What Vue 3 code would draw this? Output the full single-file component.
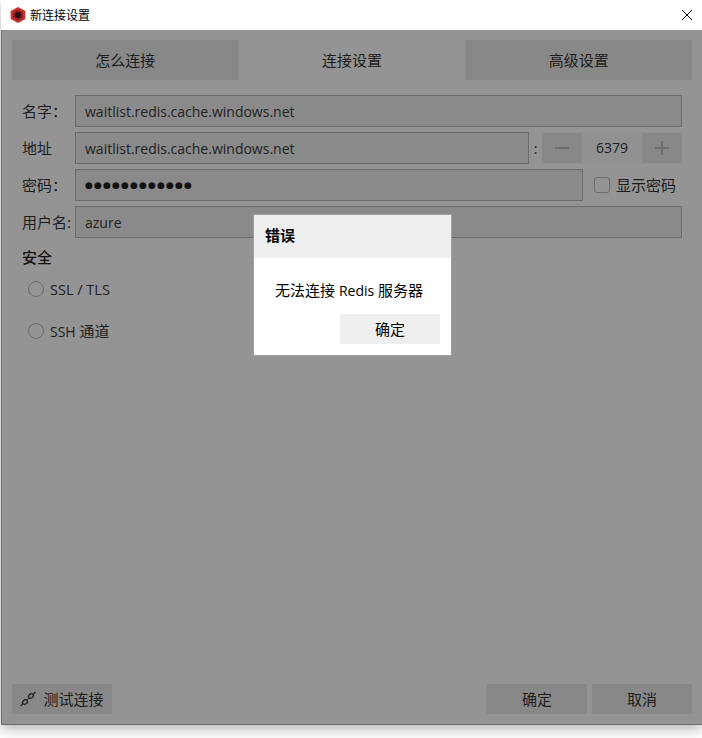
<script setup>
const tabs = [
  { label: '怎么连接', active: false },
  { label: '连接设置', active: true },
  { label: '高级设置', active: false },
]
</script>

<template>
  <div class="page">
    <div class="window">
      <header class="titlebar">
        <svg class="logo" width="16" height="16" viewBox="0 0 16 16">
          <polygon points="8,0 15.4,4 15.4,12 8,16 0.6,12 0.6,4" fill="#c6322e" />
          <polygon points="8,2.6 13,5.3 13,10.7 8,13.4 3,10.7 3,5.3" fill="#8f1f20" />
          <circle cx="8" cy="8" r="3" fill="#2c0f12" />
        </svg>
        <span class="title">新连接设置</span>
        <svg class="close" width="12" height="12" viewBox="0 0 12 12">
          <path d="M1 1L11 11M11 1L1 11" stroke="#111" stroke-width="1" fill="none" />
        </svg>
      </header>

      <div class="body">
        <nav class="tabs">
          <div v-for="t in tabs" :key="t.label" class="tab" :class="{ active: t.active }">{{ t.label }}</div>
        </nav>

        <div class="form">
          <div class="row">
            <label class="lbl">名字：</label>
            <div class="input">waitlist.redis.cache.windows.net</div>
          </div>
          <div class="row">
            <label class="lbl">地址</label>
            <div class="input">waitlist.redis.cache.windows.net</div>
            <span class="colon">:</span>
            <div class="spin">
              <span class="spin-btn">
                <svg width="14" height="14" viewBox="0 0 14 14"><path d="M0 7H14" stroke="#6e6e6e" stroke-width="2" /></svg>
              </span>
              <span class="spin-val">6379</span>
              <span class="spin-btn">
                <svg width="14" height="14" viewBox="0 0 14 14"><path d="M0 7H14M7 0V14" stroke="#6e6e6e" stroke-width="2" /></svg>
              </span>
            </div>
          </div>
          <div class="row">
            <label class="lbl">密码：</label>
            <div class="input dots">●●●●●●●●●●●●</div>
            <span class="check"></span>
            <span class="check-label">显示密码</span>
          </div>
          <div class="row">
            <label class="lbl">用户名:</label>
            <div class="input">azure</div>
          </div>
        </div>

        <div class="section">安全</div>
        <div class="radio first"><span class="dot"></span><span class="latin-wide">SSL / TLS</span></div>
        <div class="radio"><span class="dot"></span><span class="radio-cjk"><span class="latin">SSH</span> 通道</span></div>

        <footer class="footer">
          <button class="btn test">
            <svg width="16" height="16" viewBox="0 0 16 16">
              <g fill="none" stroke="#2a2a2a" stroke-width="1.4">
                <path d="M0.6 15L3 12.8" />
                <path d="M15.6 1L13 3.4" />
                <ellipse cx="5" cy="11" rx="2.6" ry="2" transform="rotate(-40 5 11)" />
                <ellipse cx="11" cy="5" rx="2.6" ry="2" transform="rotate(-40 11 5)" />
                <path d="M6.8 9.2L9.2 6.8" stroke-dasharray="1.2 0.8" />
              </g>
            </svg>
            <span>测试连接</span>
          </button>
          <button class="btn ok">确定</button>
          <button class="btn">取消</button>
        </footer>
      </div>

      <div class="dialog">
        <div class="dialog-head">错误</div>
        <div class="dialog-msg">无法连接 <span class="latin">Redis</span> 服务器</div>
        <div class="dialog-actions"><button class="dialog-btn">确定</button></div>
      </div>
    </div>
  </div>
</template>

<style>
html, body { margin: 0; background: #fff; }
</style>

<style scoped>
.page {
  width: 702px;
  height: 738px;
  overflow: hidden;
  background: #fff;
  font-family: "Open Sans", "Noto Sans CJK SC", sans-serif;
  color: #1d1d1d;
  font-size: 15px;
}
.latin { font-size: 14px; }
.latin-wide { font-size: 14.5px; }
.window {
  position: relative;
  width: 701px;
  height: 725px;
  margin-left: 1px;
  box-shadow: 0 4px 12px rgba(0, 0, 0, 0.3);
  display: flex;
  flex-direction: column;
}
.titlebar {
  height: 30px;
  flex: none;
  background: #fff;
  display: flex;
  align-items: center;
  padding: 0 9px 0 9px;
}
.logo { flex: none; }
.title { margin-left: 4px; font-size: 12px; color: #000; flex: 1; }
.close { flex: none; }
.body {
  flex: 1;
  background: #949494;
  border-left: 1px solid #6f6f6f;
  border-bottom: 1px solid #6f6f6f;
  padding: 10px 10px 10px 10px;
  display: flex;
  flex-direction: column;
  min-height: 0;
}
.tabs { display: flex; height: 40px; flex: none; }
.tab {
  flex: 1;
  display: flex;
  align-items: center;
  justify-content: center;
  background: #888;
  padding-bottom: 2px;
  box-sizing: border-box;
}
.tab.active { background: transparent; }
.form {
  margin-top: 15px;
  display: flex;
  flex-direction: column;
  gap: 5px;
  padding-right: 10px;
}
.row { display: flex; align-items: center; height: 32px; }
.lbl { width: 63px; flex: none; padding: 0 0 2px 10px; box-sizing: border-box; white-space: nowrap; }
.input {
  flex: 1;
  height: 32px;
  box-sizing: border-box;
  border: 1px solid #6c6c6c;
  background: #8a8a8a;
  padding-left: 9px;
  line-height: 31px;
  font-size: 14px;
  color: #222;
  white-space: nowrap;
  overflow: hidden;
}
.dots { font-size: 9px; letter-spacing: 1.15px; color: #111; font-family: "DejaVu Sans", sans-serif; }
.colon { width: 13px; flex: none; text-align: center; font-size: 14px; }
.spin { width: 140px; flex: none; height: 30px; display: flex; }
.spin-btn { width: 40px; background: #888; display: flex; align-items: center; justify-content: center; }
.spin-val { flex: 1; background: #919191; text-align: center; line-height: 30px; font-size: 14px; }
.check {
  width: 14px;
  height: 14px;
  margin-left: 11px;
  border: 1px solid #6c6c6c;
  border-radius: 3px;
  flex: none;
}
.check-label { margin-left: 6px; margin-right: 6px; padding-bottom: 2px; flex: none; }
.section { margin: 9px 0 0 10px; line-height: 20px; font-weight: 500; color: #111; }
.radio { display: flex; align-items: center; height: 20px; margin: 22px 0 0 16px; color: #222; }
.radio.first { margin-top: 12px; }
.radio-cjk { padding-bottom: 2px; }
.dot {
  width: 14px;
  height: 14px;
  border: 1px solid #6c6c6c;
  border-radius: 50%;
  margin-right: 6px;
  flex: none;
}
.footer { margin-top: auto; display: flex; gap: 5px; }
.btn {
  width: 100px;
  height: 30px;
  border: none;
  background: #888;
  color: #1d1d1d;
  font: inherit;
  padding: 0 0 2px;
  box-sizing: border-box;
  display: flex;
  align-items: center;
  justify-content: center;
  gap: 7px;
}
.btn svg { margin-top: 2px; }
.btn.test { margin-right: 370px; }
.dialog {
  position: absolute;
  left: 252px;
  top: 214px;
  width: 199px;
  height: 142px;
  box-sizing: border-box;
  border: 1px solid #a0a0a0;
  background: #fff;
  color: #000;
  display: flex;
  flex-direction: column;
}
.dialog-head {
  height: 43px;
  flex: none;
  background: #efefef;
  padding-left: 11px;
  line-height: 41px;
  font-size: 15px;
  font-weight: 700;
}
.dialog-msg { margin-top: 21px; padding-left: 21px; line-height: 22px; white-space: nowrap; }
.dialog-actions { margin-top: 12px; display: flex; justify-content: flex-end; padding-right: 11px; }
.dialog-btn {
  width: 100px;
  height: 30px;
  border: none;
  background: #efefef;
  font: inherit;
  color: #000;
  padding: 0 0 2px 0;
  box-sizing: border-box;
}
</style>
